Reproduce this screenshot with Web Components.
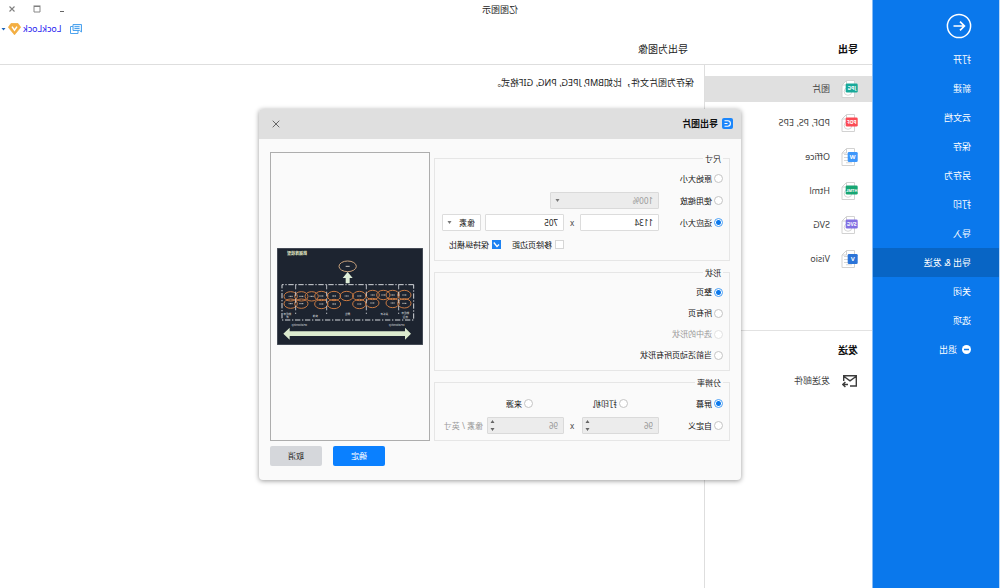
<!DOCTYPE html>
<html lang="zh-CN">
<head>
<meta charset="utf-8">
<title>亿图图示</title>
<style>
  body { margin: 0; background: #fff; overflow-x: hidden; }
</style>
</head>
<body>
<app-window></app-window>

<script>
const BASE = `
  *, *::before, *::after { box-sizing: border-box; }
  button, input, select { font: inherit; color: inherit; margin: 0; }
  button { border: 0; background: none; padding: 0; }
  a { color: inherit; text-decoration: none; }
  svg { display: block; flex: none; }
  h1, h2, p { margin: 0; font-size: inherit; }
`;

function define(name, css, html, setup) {
  customElements.define(name, class extends HTMLElement {
    connectedCallback() {
      if (this.shadowRoot) return;
      const root = this.attachShadow({ mode: 'open' });
      const body = typeof html === 'function' ? html(this) : html;
      root.innerHTML = `<style>${BASE}${css}</style>${body}`;
      if (setup) setup(root, this);
    }
  });
}

/* Left navigation */
define('nav-item', `
  :host { display: block; }
  a { display: flex; align-items: center; gap: 5px; height: 29px; padding-left: 28px; color: #fff; font-size: 9px; }
  :host([current]) a { background: #0865c5; }
`, `<a href="#"><slot></slot></a>`);

define('side-nav', `
  :host { display: block; background: #0a78ec; border-left: 1px solid #b9d8f9; border-right: 1px solid #86bbf5; }
  .back { display: block; margin: 13px 0 6px 27px; width: 26px; height: 26px; }
`, `
  <button class="back" aria-label="返回">
    <svg width="26" height="26" viewBox="0 0 26 26" fill="none" stroke="#fff" stroke-width="1.5">
      <circle cx="13" cy="13" r="11.6"/><path d="M18.5 13H8M12 8.6L7.6 13l4.4 4.4" stroke-width="1.7"/>
    </svg>
  </button>
  <nav>
    <nav-item>打开</nav-item>
    <nav-item>新建</nav-item>
    <nav-item>云文档</nav-item>
    <nav-item>保存</nav-item>
    <nav-item>另存为</nav-item>
    <nav-item>打印</nav-item>
    <nav-item>导入</nav-item>
    <nav-item current>导出 &amp; 发送</nav-item>
    <nav-item>关闭</nav-item>
    <nav-item>选项</nav-item>
    <nav-item><svg width="9" height="9" viewBox="0 0 9 9"><circle cx="4.5" cy="4.5" r="4.5" fill="#fff"/><path d="M2 4.5h5" stroke="#0a78ec" stroke-width="1.5"/></svg>退出</nav-item>
  </nav>
`);

/* Title, window controls and account */
define('title-bar', `
  :host { display: grid; grid-template-columns: 1fr 128px; grid-template-rows: 20px 20px; }
  h1 { font-weight: 400; text-align: center; line-height: 20px; color: #222; font-size: 9px; }
  .controls { display: flex; justify-content: flex-end; align-items: center; gap: 15px; padding-right: 7px; height: 18px; }
  .account { grid-column: 2; display: flex; justify-content: flex-end; align-items: center; gap: 2px; padding-right: 1px; height: 18px; }
  .account a { color: #2a1cf0; font-size: 9px; }
  .chat { margin-right: 6px; }
`, `
  <h1>亿图图示</h1>
  <div class="controls">
    <button aria-label="最小化"><svg width="10" height="10" viewBox="0 0 10 10"><path d="M3 7.5h4" stroke="#666"/></svg></button>
    <button aria-label="最大化"><svg width="10" height="10" viewBox="0 0 10 10"><path d="M2 2.5h6V8H2z" fill="none" stroke="#888"/><path d="M1.5 2h7" stroke="#777"/></svg></button>
    <button aria-label="关闭"><svg width="10" height="10" viewBox="0 0 10 10"><path d="M2.5 2.5l5 5m0-5l-5 5" stroke="#808080" stroke-width="1.1"/></svg></button>
  </div>
  <div class="account">
    <button class="chat" aria-label="消息"><svg width="12" height="10" viewBox="0 0 12 10" fill="none" stroke="#4da3ee"><path d="M.5.5h8.500v6H2.500L.5 8z" fill="#e2f1fd"/><path d="M2.500 2.600h5M2.500 4.500h5M9 2.500h2.500V9.500H4V7"/></svg></button>
    <a href="#">LockLock</a>
    <svg width="13" height="12" viewBox="0 0 13 12"><path d="M3 .5h7L12.600 4.300 6.500 11.800.400 4.300z" fill="#f3ae42" stroke="#f3ae42" stroke-linejoin="round" stroke-width=".8"/><path d="M4 3.600l2.500 3.500L9 3.600" fill="none" stroke="#fff" stroke-width="1.500"/></svg>
    <svg width="5" height="3" viewBox="0 0 5 3"><path d="M.5 0h4L2.500 2.500z" fill="#1c62b8"/></svg>
  </div>
`);

/* A page with a coloured badge */
const SHEET = {
  JPG: ['#18a999', 12], PDF: ['#fb4b55', 12], W: ['#3d97fb', 10],
  HTML: ['#18a673', 12], SVG: ['#8270e2', 12], V: ['#2b74d8', 10]
};
define('file-icon', `
  :host { display: block; flex: none; }
  text { font: 700 6px "Noto Sans", sans-serif; fill: #fff; text-anchor: middle; }
  text.mid { font-size: 5px; }
  text.small { font-size: 4px; }
`, el => {
  const kind = el.getAttribute('kind');
  const [colour, w] = SHEET[kind];
  const tall = w === 10;
  return `<svg width="17" height="18" viewBox="0 0 17 18" aria-hidden="true">
    <path d="M3.500.500h8l4.500 4.500v12.500H3.500z" fill="#fff" stroke="#d2d2d2"/>
    <path d="M11.500.500v4.500H16" fill="none" stroke="#d2d2d2"/>
    ${tall ? '<path d="M6 6.500h8M6 9.500h8M6 12.500h8M6 14.800h6" stroke="#d6d6d6"/>'
           : '<circle cx="10" cy="11.500" r="3.800" fill="none" stroke="#d6d6d6"/>'}
    <rect x=".300" y="${tall ? 4 : 3.500}" width="${w}" height="${tall ? 10 : 9}" rx="1.300" fill="${colour}"/>
    <text x="${w / 2 + .3}" y="${tall ? 11.300 : 9.800}" class="${kind.length > 3 ? 'small' : kind.length > 1 ? 'mid' : ''}">${kind}</text>
  </svg>`;
});

define('type-item', `
  :host { display: block; }
  a { display: flex; align-items: center; gap: 11px; height: 26px; padding-left: 14px; font-size: 9px; color: #444; }
  :host([current]) a { background: #e0e0e0; }
  .icon { display: block; width: 17px; }
`, `<a href="#"><span class="icon"><slot name="icon"></slot></span><slot></slot></a>`);

define('export-list', `
  :host { display: block; border-right: 1px solid #dedede; }
  .types { display: grid; gap: 8px; padding: 11px 0 58px; border-bottom: 1px solid #e2e2e2; }
  h2 { font-size: 10px; line-height: 16px; color: #111; padding: 11px 14px 10px; }
`, `
  <div class="types">
    <type-item current><file-icon slot="icon" kind="JPG"></file-icon>图片</type-item>
    <type-item><file-icon slot="icon" kind="PDF"></file-icon>PDF, PS, EPS</type-item>
    <type-item><file-icon slot="icon" kind="W"></file-icon>Office</type-item>
    <type-item><file-icon slot="icon" kind="HTML"></file-icon>Html</type-item>
    <type-item><file-icon slot="icon" kind="SVG"></file-icon>SVG</type-item>
    <type-item><file-icon slot="icon" kind="V"></file-icon>Visio</type-item>
  </div>
  <h2>发送</h2>
  <type-item><svg slot="icon" width="16" height="14" viewBox="0 0 16 14" fill="none" stroke="#3c3c3c" stroke-width="1.400"><path d="M8 12H1.700V1.700h12.600V7M2 2.500l6 4.300 6-4.300M15 10.500h-5M12.600 8l2.600 2.500-2.600 2.500"/></svg>发送邮件</type-item>
`);

/* Form styles shared by the three option groups */
const FORM = `
  :host { display: block; }
  fieldset { margin: 0; min-width: 0; border: 1px solid #e6e6e6; padding: 3px 6px 4px; }
  legend { padding: 0 2px; line-height: 12px; color: #222; }
  .row { display: grid; grid-template-columns: 64px 79px 16px 79px 1fr; align-items: center; height: 22px; }
  label { display: flex; align-items: center; gap: 2px; white-space: nowrap; color: #111; }
  label.off { color: #999; }
  input[type=radio] { appearance: none; width: 9px; height: 9px; border: 1px solid #c4c4c4; border-radius: 50%; background: #fff; flex: none; }
  input[type=radio]:checked { border-color: #4a9ff5; background: radial-gradient(circle, #0a78ec 0 2px, #fff 3px); }
  input[type=radio]:disabled { border-color: #e2e2e2; }
  input[type=checkbox] { display: block; appearance: none; width: 9px; height: 9px; border: 1px solid #d6d6d6; background: #fff; flex: none; }
  input[type=checkbox]:checked { border-color: #1d82f2; background: #1d82f2; }
  .tick { position: relative; display: block; }
  .tick svg { position: absolute; inset: 0; pointer-events: none; }
  input[type=text], select { appearance: none; width: 100%; height: 17px; border: 1px solid #dcdcdc; border-radius: 1px; background: #fff; padding: 0 5px; outline: 0; color: #222; opacity: 1; }
  input:disabled[type=text], select:disabled { background: #ececec; color: #999; border-color: #dadada; }
  .times { text-align: center; color: #444; }
  .pick { position: relative; display: block; }
  .pick svg { position: absolute; right: 5px; top: 7px; pointer-events: none; }
  .spin { position: relative; display: block; width: 77px; }
  .spin svg { position: absolute; right: 3px; top: 3px; }
`;
const CARET = `<svg width="5" height="3" viewBox="0 0 5 3"><path d="M.5 0h4L2.500 3z" fill="#777"/></svg>`;
const STEPS = `<svg width="5" height="11" viewBox="0 0 5 11"><path d="M.5 3h4L2.500 0zM.5 8h4L2.500 11z" fill="#666"/></svg>`;

define('size-group', FORM + `
  .unit { margin-left: 4px; width: 39px; }
  .zoom { grid-column: 2 / 5; width: 109px; }
  .checks { grid-column: 4 / 6; display: flex; gap: 11px; }
  .checks label { gap: 3px; }
`, `
  <fieldset>
    <legend>尺寸</legend>
    <div class="row"><label><input type="radio" name="size">原始大小</label></div>
    <div class="row">
      <label><input type="radio" name="size">使用缩放</label>
      <span class="pick zoom"><select aria-label="缩放" disabled><option>100%</option></select>${CARET}</span>
    </div>
    <div class="row">
      <label><input type="radio" name="size" checked>适应大小</label>
      <input type="text" aria-label="宽度" value="1134">
      <span class="times">x</span>
      <input type="text" aria-label="高度" value="705">
      <span class="pick unit"><select aria-label="单位"><option>像素</option></select>${CARET}</span>
    </div>
    <div class="row">
      <div class="checks">
        <label><input type="checkbox">移除页边距</label>
        <label><span class="tick"><input type="checkbox" checked><svg width="9" height="9" viewBox="0 0 9 9"><path d="M2 4.500l2 2 3.200-4" fill="none" stroke="#fff" stroke-width="1.300"/></svg></span>保持纵横比</label>
      </div>
    </div>
  </fieldset>
`);

define('shape-group', FORM + `
  .line { display: flex; height: 21px; }
`, `
  <fieldset>
    <legend>形状</legend>
    <div class="line"><label><input type="radio" name="shape" checked>整页</label></div>
    <div class="line"><label><input type="radio" name="shape">所有页</label></div>
    <div class="line"><label class="off"><input type="radio" name="shape" disabled>选中的形状</label></div>
    <div class="line"><label><input type="radio" name="shape">当前活动页所有形状</label></div>
  </fieldset>
`);

define('resolution-group', FORM + `
  fieldset { padding: 4px 6px 3px; }
  .kinds { display: grid; grid-template-columns: 95px 95px 1fr; height: 22px; }
  .unit { color: #999; padding-left: 2px; white-space: nowrap; }
`, `
  <fieldset>
    <legend>分辨率</legend>
    <div class="kinds">
      <label><input type="radio" name="dpi" checked>屏幕</label>
      <label><input type="radio" name="dpi">打印机</label>
      <label><input type="radio" name="dpi">来源</label>
    </div>
    <div class="row">
      <label><input type="radio" name="dpi">自定义</label>
      <span class="spin"><input type="text" aria-label="水平分辨率" value="96" disabled>${STEPS}</span>
      <span class="times">x</span>
      <span class="spin"><input type="text" aria-label="垂直分辨率" value="96" disabled>${STEPS}</span>
      <span class="unit">像素 / 英寸</span>
    </div>
  </fieldset>
`);

/* Thumbnail of the diagram that will be exported */
define('diagram-preview', `
  :host { display: grid; place-items: center; border: 1px solid #adadad; background: #fafafa; }
  text { font-family: "Noto Sans CJK SC", sans-serif; fill: #d9dcdf; text-anchor: middle; font-size: 8px; }
  text.title { font-size: 12px; font-weight: 700; fill: #e6ecc8; }
`, () => {
  const oval = (x, y, t) => `<ellipse cx="${x}" cy="${y}" rx="20" ry="14"/><path d="M${x - 6} ${y}h${t}" stroke="#c9c4bd" stroke-width="3" stroke-dasharray="4 1"/>`;
  const first = [[56,141],[91,141],[119,141],[151,141],[191,144],[229,144],[267,144],[305,144],[334,145],[365,145],[397,145]];
  const second = [[56,166],[91,165],[152,165],[191,168],[267,168],[305,168],[365,167],[397,167]];
  return `<svg width="146" height="97" viewBox="0 0 438 291" role="img" aria-label="预览">
    <rect width="438" height="291" fill="#1d2430"/>
    <rect x="1" y="1" width="436" height="289" fill="none" stroke="#595e68" stroke-width="2"/>
    <text class="title" x="378" y="21">数据库模型</text>
    <g fill="none" stroke="#c97a43" stroke-width="3">
      <ellipse cx="226" cy="55" rx="26" ry="16" stroke="#c9a27c"/><path d="M220 55h12" stroke="#c9c4bd"/>
      ${first.map(p => oval(p[0], p[1], 12)).join('')}
      ${second.map(p => oval(p[0], p[1], 12)).join('')}
    </g>
    <g fill="none" stroke="#d5d8dc" stroke-width="3">
      <rect x="28" y="110" width="395" height="106" stroke-dasharray="16 5 4 5"/>
      <path d="M382 110v88M289 110v88M170 110v88M73 110v88" stroke-dasharray="14 7" stroke-width="2.500"/>
    </g>
    <path d="M226 72l15 18h-9v16h-12V90h-9z" fill="#dfeed8"/>
    <path d="M36 257l18-18v11h346v-11l19 18-19 18v-11H54v11z" fill="#dcebcf"/>
    <text x="407" y="202">数据库</text><text x="407" y="211">表</text>
    <text x="323" y="207">实体</text><text x="226" y="202">属性</text><text x="116" y="202">关系表</text>
    <text x="53" y="199">数据库</text><text x="53" y="210">模型</text>
    <text x="371" y="234">Relationship</text><text x="79" y="234">Relationship</text>
  </svg>`;
});

define('export-dialog', `
  :host { display: block; width: 482px; max-width: 100%; background: #fafafa; border-radius: 4px; box-shadow: 0 1px 5px rgba(0,0,0,.4); overflow: hidden; }
  header { display: flex; align-items: center; gap: 4px; height: 30px; background: #dfdfdf; padding: 0 13px 0 8px; }
  h2 { flex: 1; font-size: 9px; color: #111; }
  .body { display: grid; grid-template-columns: 1fr 160px; gap: 4px; padding: 13px 11px 5px; }
  .groups { display: grid; gap: 6px; padding-top: 1px; }
  footer { display: flex; justify-content: flex-end; gap: 11px; padding: 0 11px 14px; }
  footer button { width: 52px; height: 20px; border-radius: 2px; background: #d5d7db; color: #222; }
  footer button.main { background: #0a80ff; color: #fff; }
`, `
  <header>
    <svg width="11" height="11" viewBox="0 0 11 11"><rect width="11" height="11" rx="2" fill="#1b86fb"/><path d="M8.500 2.800H5.300a2.700 2.700 0 0 0 0 5.400h3.200M5.500 5.500h3" fill="none" stroke="#fff" stroke-width="1.100"/></svg>
    <h2>导出图片</h2>
    <button aria-label="关闭"><svg width="8" height="8" viewBox="0 0 8 8"><path d="M.7.7l6.600 6.600m0-6.600L.7 7.300" stroke="#666"/></svg></button>
  </header>
  <div class="body">
    <div class="groups">
      <size-group></size-group>
      <shape-group></shape-group>
      <resolution-group></resolution-group>
    </div>
    <diagram-preview></diagram-preview>
  </div>
  <footer><button class="main">确定</button><button>取消</button></footer>
`);

/* The whole window is drawn as seen in a mirror */
define('app-window', `
  :host {
    display: grid; grid-template-columns: 128px 1fr; min-height: 100vh; position: relative;
    font: 8px/12px "Noto Sans", "Noto Sans CJK SC", sans-serif; color: #222; background: #fff;
    transform: scaleX(-1);
  }
  main { display: grid; grid-template-columns: 168px 1fr; grid-template-rows: 40px 25px 1fr; }
  title-bar { grid-column: 1 / 3; }
  .heads { grid-column: 1 / 3; display: grid; grid-template-columns: 168px 1fr; border-bottom: 1px solid #dedede; font-size: 10px; line-height: 18px; }
  .heads h2 { padding-left: 14px; color: #111; }
  .heads p { padding-left: 16px; }
  .note { padding: 12px 10px; color: #222; font-size: 9px; }
  .overlay { position: absolute; inset: 0; display: grid; place-items: center; }
`, `
  <side-nav></side-nav>
  <main>
    <title-bar></title-bar>
    <div class="heads"><h2>导出</h2><p>导出为图像</p></div>
    <export-list></export-list>
    <p class="note">保存为图片文件，比如BMP, JPEG, PNG, GIF格式。</p>
  </main>
  <div class="overlay"><export-dialog></export-dialog></div>
`);
</script>
</body>
</html>
